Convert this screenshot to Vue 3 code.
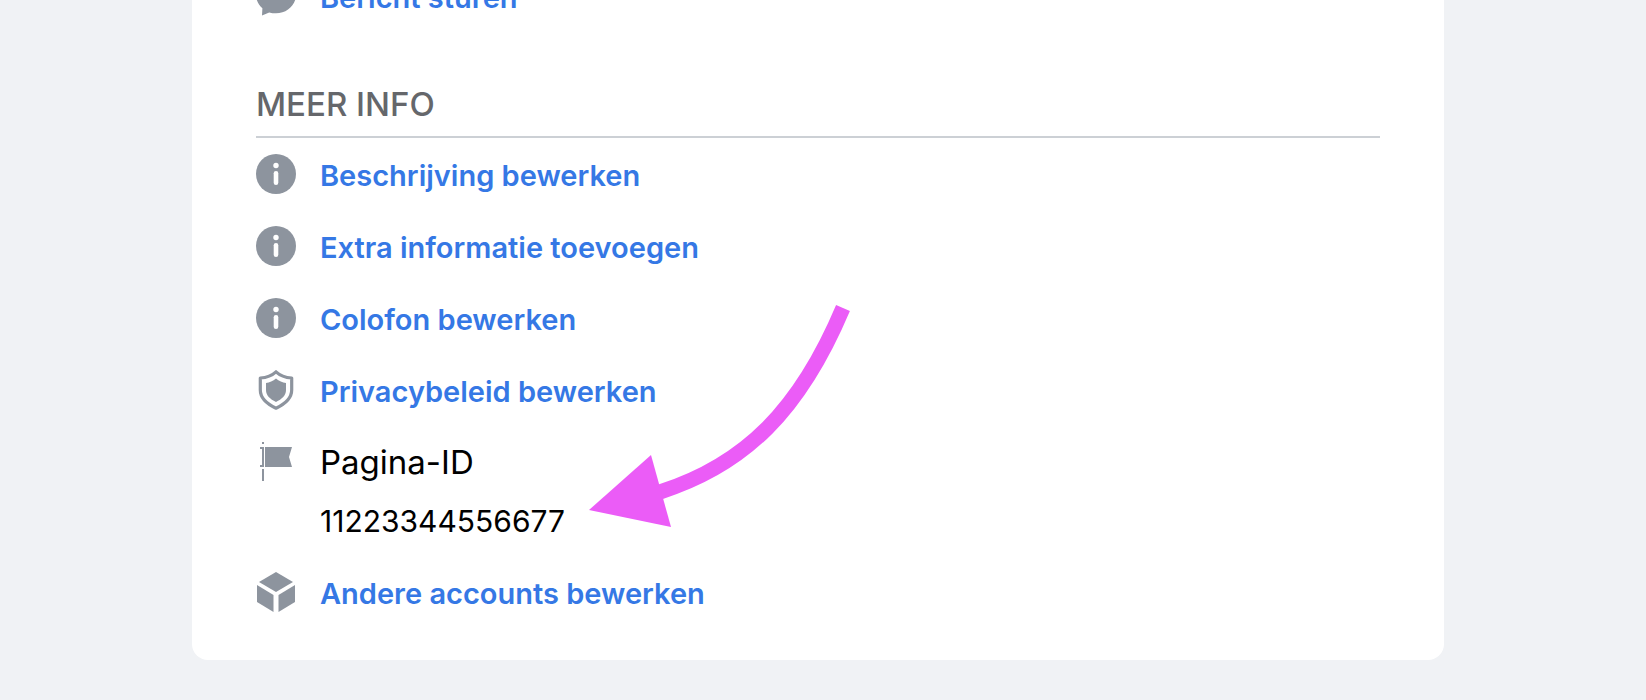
<template>
  <div class="page">
    <div class="card">
      <div class="row row--top">
        <svg class="icon" viewBox="0 0 40 40">
          <path d="M20 0C9 0 0 8.300 0 18.600c0 5.400 2.400 10.200 6.400 13.600L6 39.600l7.200-3.200c2.100.6 4.400.9 6.800.9 11 0 20-8.300 20-18.700S31 0 20 0z" fill="#8d949e" />
        </svg>
        <a class="link">Bericht sturen</a>
      </div>

      <div class="section">
        <h2 class="section__title">MEER INFO</h2>
        <div class="section__list">
          <div v-for="item in infoLinks" :key="item" class="row">
            <svg class="icon" viewBox="0 0 40 40">
              <circle cx="20" cy="20" r="20" fill="#8d949e" />
              <circle cx="20" cy="11.500" r="2.700" fill="#fff" />
              <rect x="17.700" y="17" width="4.600" height="14" rx="2.300" fill="#fff" />
            </svg>
            <a class="link">{{ item }}</a>
          </div>

          <div class="row">
            <svg class="icon" viewBox="0 0 40 40">
              <path d="M20 1.800C24 5.500 29 7.500 35.700 8V20C35.700 28 29 34 20 38.200C11 34 4.300 28 4.300 20V8C11 7.500 16 5.500 20 1.800z" fill="none" stroke="#8d949e" stroke-width="3.200" stroke-linejoin="round" />
              <path d="M20 8.500C23 11 26.500 12.500 30 13V20C30 25.500 26 29 20 32C14 29 10 25.500 10 20V13C13.500 12.500 17 11 20 8.500z" fill="#8d949e" />
            </svg>
            <a class="link">Privacybeleid bewerken</a>
          </div>

          <div class="row row--id">
            <svg class="icon" viewBox="0 0 40 40">
              <rect x="6" y="0" width="2" height="2" fill="#8d949e" />
              <rect x="4" y="5" width="4" height="2" fill="#8d949e" />
              <rect x="4" y="23" width="4" height="2" fill="#8d949e" />
              <rect x="6" y="7" width="2" height="16" fill="#8d949e" />
              <rect x="6" y="27" width="2" height="12" fill="#8d949e" />
              <path d="M9 5H36L33 15L36 25H9z" fill="#8d949e" />
            </svg>
            <div class="page-id">
              <div class="page-id__label">Pagina-ID</div>
              <div class="page-id__value">11223344556677</div>
            </div>
          </div>

          <div class="row">
            <svg class="icon" viewBox="0 0 40 40">
              <path d="M20 0L37 10L20 20L3 10z" fill="#8d949e" />
              <path d="M1 13L17.500 23V40L1 30z" fill="#8d949e" />
              <path d="M39 13L22.500 23V40L39 30z" fill="#8d949e" />
            </svg>
            <a class="link">Andere accounts bewerken</a>
          </div>
        </div>
      </div>
    </div>

    <svg class="arrow" width="1646" height="700" viewBox="0 0 1646 700">
      <path d="M843 308C800 410 745 465 660 492" fill="none" stroke="#eb5cf7" stroke-width="15" />
      <path d="M651 455L589 510L671 527z" fill="#eb5cf7" />
    </svg>
  </div>
</template>

<script setup>
const infoLinks = [
  "Beschrijving bewerken",
  "Extra informatie toevoegen",
  "Colofon bewerken",
];
</script>

<style>
html,
body {
  margin: 0;
  background: #f0f2f5;
}
</style>

<style scoped>
.page {
  position: relative;
  height: 700px;
  overflow: hidden;
  background: #f0f2f5;
  font-family: Inter, "Liberation Sans", sans-serif;
}

.card {
  box-sizing: border-box;
  width: 1252px;
  height: 760px;
  margin: -100px 0 0 192px;
  padding: 60px 64px 0;
  background: #fff;
  border-radius: 16px;
}

.row {
  display: flex;
  align-items: center;
  gap: 24px;
  height: 72px;
}

.row--id {
  align-items: flex-start;
  height: 130px;
  padding-top: 16px;
  box-sizing: border-box;
}

.icon {
  width: 40px;
  height: 40px;
  flex-shrink: 0;
}

.link {
  margin-top: 3px;
  color: #3578e5;
  font-size: 29px;
  font-weight: 600;
  line-height: 36px;
}

.section {
  margin-top: 52px;
}

.section__title {
  margin: 0;
  padding-bottom: 12px;
  border-bottom: 2px solid #ccd0d5;
  color: #65676b;
  font-size: 33px;
  font-weight: 500;
  line-height: 40px;
}

.page-id__label {
  color: #000;
  font-size: 33px;
  font-weight: 400;
  line-height: 40px;
}

.page-id__value {
  margin-top: 21px;
  color: #000;
  font-size: 30px;
  line-height: 36px;
}

.arrow {
  position: absolute;
  top: 0;
  left: 0;
  pointer-events: none;
}
</style>
